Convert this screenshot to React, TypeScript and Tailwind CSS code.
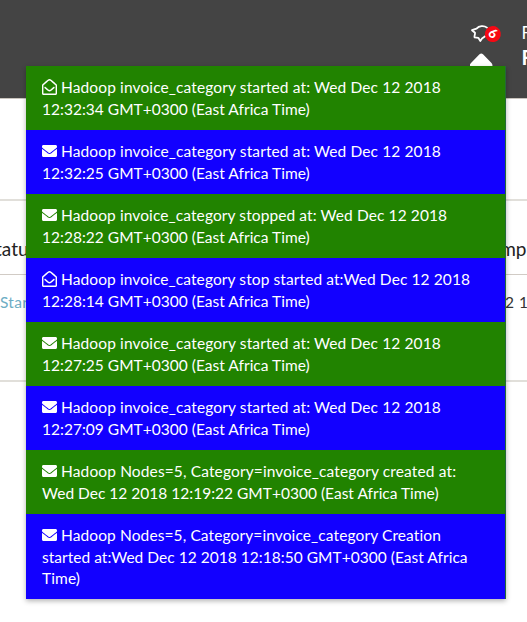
import { FaEnvelope, FaRegEnvelopeOpen } from 'react-icons/fa';

type Line = { text: string; spacing: string };
type Notice = { open?: boolean; lines: Line[] };

const FIRST = 'tracking-[0.12px]';
const DATE = 'tracking-[0.02px]';

const notices: Notice[] = [
  { open: true, lines: [{ text: 'Hadoop invoice_category started at: Wed Dec 12 2018', spacing: FIRST }, { text: '12:32:34 GMT+0300 (East Africa Time)', spacing: DATE }] },
  { lines: [{ text: 'Hadoop invoice_category started at: Wed Dec 12 2018', spacing: FIRST }, { text: '12:32:25 GMT+0300 (East Africa Time)', spacing: DATE }] },
  { lines: [{ text: 'Hadoop invoice_category stopped at: Wed Dec 12 2018', spacing: 'tracking-[0.1px]' }, { text: '12:28:22 GMT+0300 (East Africa Time)', spacing: DATE }] },
  { open: true, lines: [{ text: 'Hadoop invoice_category stop started at:Wed Dec 12 2018', spacing: 'tracking-[0.1px]' }, { text: '12:28:14 GMT+0300 (East Africa Time)', spacing: DATE }] },
  { lines: [{ text: 'Hadoop invoice_category started at: Wed Dec 12 2018', spacing: FIRST }, { text: '12:27:25 GMT+0300 (East Africa Time)', spacing: DATE }] },
  { lines: [{ text: 'Hadoop invoice_category started at: Wed Dec 12 2018', spacing: FIRST }, { text: '12:27:09 GMT+0300 (East Africa Time)', spacing: DATE }] },
  { lines: [{ text: 'Hadoop Nodes=5, Category=invoice_category created at:', spacing: 'tracking-[0.13px]' }, { text: 'Wed Dec 12 2018 12:19:22 GMT+0300 (East Africa Time)', spacing: 'tracking-[0.01px]' }] },
  { lines: [{ text: 'Hadoop Nodes=5, Category=invoice_category Creation', spacing: 'tracking-[0.11px]' }, { text: 'started at:Wed Dec 12 2018 12:18:50 GMT+0300 (East Africa', spacing: 'tracking-[0.03px]' }, { text: 'Time)', spacing: 'tracking-[0.1px]' }] },
];

function Item({ notice, index }: { notice: Notice; index: number }) {
  const Icon = notice.open ? FaRegEnvelopeOpen : FaEnvelope;
  return (
    <li className={`px-4 pt-[10.5px] ${index % 2 ? 'bg-[#1200ff]' : 'bg-[#218300]'} ${index === 7 ? 'h-[85px]' : 'h-16'}`}>
      {notice.lines.map((line, i) => (
        <div key={i} className={`flex items-center whitespace-nowrap ${i === 0 ? 'h-[21.6px]' : 'h-[21.4px] pt-px'}`}>
          {i === 0 && <Icon preserveAspectRatio="none" className="mr-1 h-4 w-[15px] shrink-0" />}
          <span className={line.spacing}>{line.text}</span>
        </div>
      ))}
    </li>
  );
}

export default function App() {
  return (
    <div className="relative h-[622px] w-[527px] overflow-hidden bg-white font-['Lato','Noto_Sans',sans-serif] text-[15.5px] leading-[21px]">
      <header className="flex h-[98px] justify-end overflow-hidden bg-[#444] text-white">
        <div className="relative mt-[23px] h-[42px] w-[57px]">
          <svg className="absolute left-0 top-0 h-5 w-6" viewBox="0 0 24 20" fill="none" stroke="white" strokeWidth="1.8" strokeLinejoin="round" strokeLinecap="round">
            <path d="M2 7.2L6.5 5.6C9 2.6 14 2.2 17 4.6M2 7.2L5 9.8C5.2 12 4 12.8 4.6 14.3L8.3 14.8L10.3 18L12 15.5L15.5 13" />
          </svg>
          <span className="absolute left-[15px] top-[3px] flex size-[15.5px] rotate-[35deg] items-center justify-center rounded-full bg-[#f60914] text-[13px] font-black">6</span>
          <svg className="absolute left-0 top-[30px] h-[14px] w-6" viewBox="0 0 24 14"><path d="M-.5 13C-.5 12 0 11 1 10L9.5 1.2Q11.3 -.4 13 1.2L21.5 10Q22.5 11 22.5 13Z" fill="white" /></svg>
          <div className="absolute left-[51.5px] top-0 text-[17px] leading-5">F</div>
          <div className="absolute left-[51.5px] top-[24px] text-xl font-bold leading-5">F</div>
        </div>
      </header>
      <main>
        <div className="h-[101px] border-t border-[#c9c4bd]" />
        <section className="h-[183px] border-y-2 border-[#e1dfda]">
          <div className="flex h-[74px] items-center justify-between overflow-hidden border-b border-[#d1cbc5] pt-[21px] text-[19px] text-[#222]">
            <span className="-ml-[5px]">tatus</span>
            <span className="-mr-[4px]">mpl</span>
          </div>
          <div className="flex h-[54px] items-center justify-between overflow-hidden">
            <span className="tracking-[0.3px] text-[#6dadc4]">Start</span>
            <span className="-mr-[11px] whitespace-nowrap tracking-[0.5px] text-[#333]">2 12</span>
          </div>
        </section>
      </main>
      <ul className="absolute left-[26px] top-[66px] w-[480px] border-r border-[#236a38] text-white shadow-[0_2px_5px_rgba(0,0,0,0.3)]">
        {notices.map((notice, i) => <Item key={i} notice={notice} index={i} />)}
      </ul>
    </div>
  );
}
